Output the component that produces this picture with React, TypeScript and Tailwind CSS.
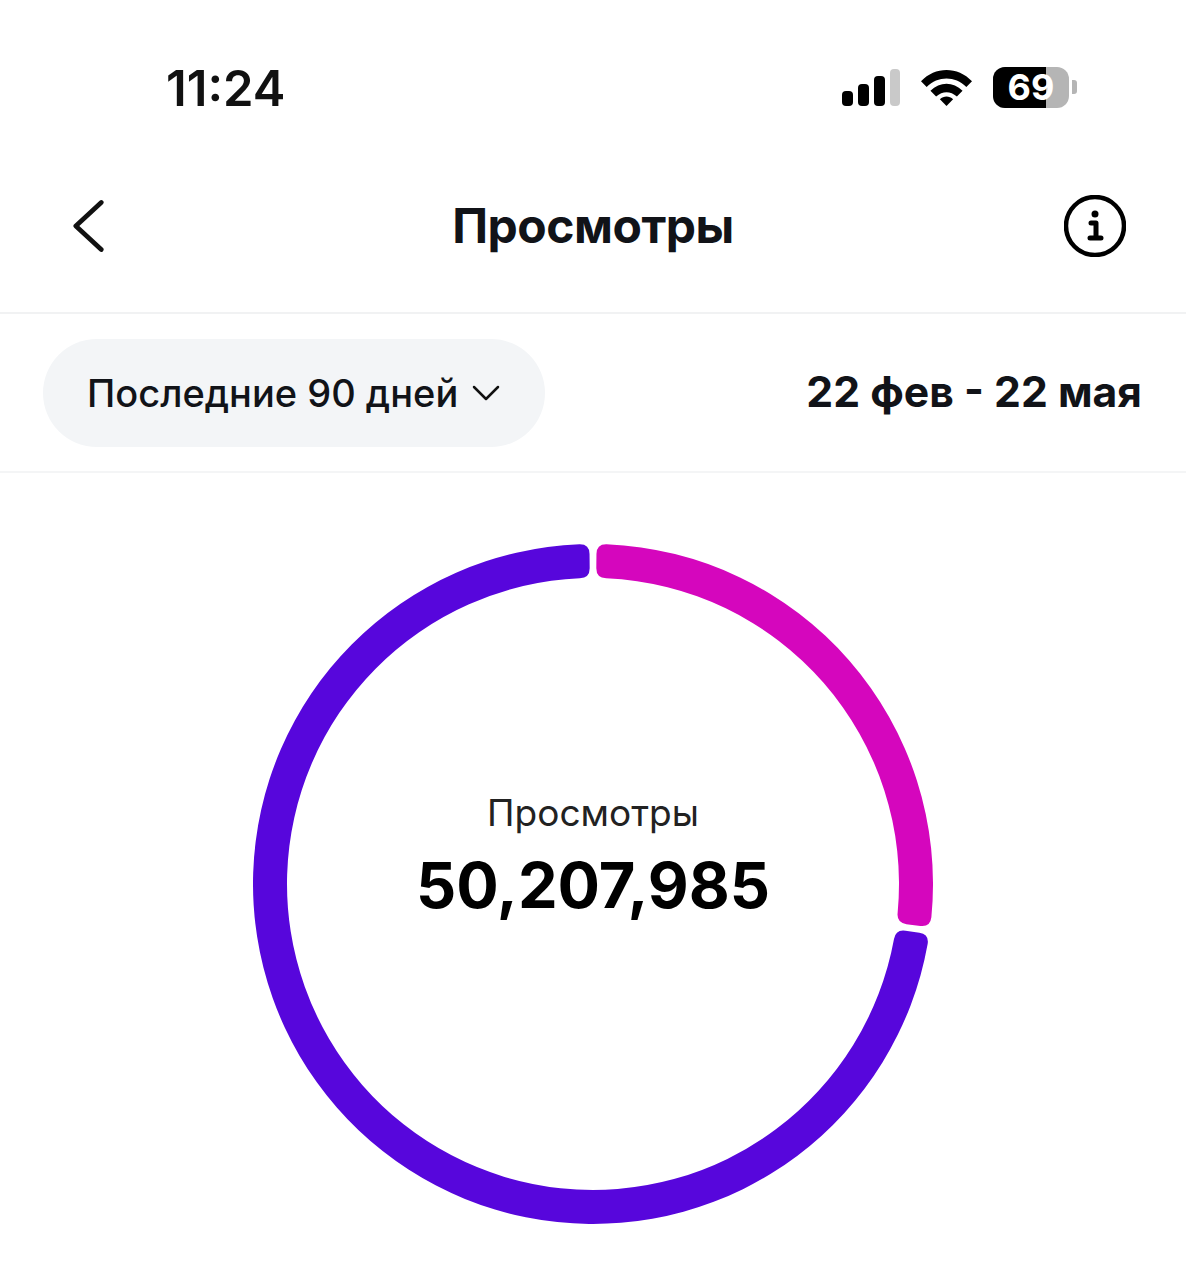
const polar = (r: number, deg: number) => {
  const a = ((deg - 90) * Math.PI) / 180;
  return `${(340 + r * Math.cos(a)).toFixed(2)} ${(340 + r * Math.sin(a)).toFixed(2)}`;
};

// ring segment with small rounded corners
const sector = (start: number, end: number) => {
  const outer = 340;
  const inner = 306;
  const c = 10;
  const dOut = ((c / outer) * 180) / Math.PI;
  const dIn = ((c / inner) * 180) / Math.PI;
  const large = end - start > 180 ? 1 : 0;
  return [
    `M ${polar(outer, start + dOut)}`,
    `A ${outer} ${outer} 0 ${large} 1 ${polar(outer, end - dOut)}`,
    `Q ${polar(outer, end)} ${polar(outer - c, end)}`,
    `L ${polar(inner + c, end)}`,
    `Q ${polar(inner, end)} ${polar(inner, end - dIn)}`,
    `A ${inner} ${inner} 0 ${large} 0 ${polar(inner, start + dIn)}`,
    `Q ${polar(inner, start)} ${polar(inner + c, start)}`,
    `L ${polar(outer - c, start)}`,
    `Q ${polar(outer, start)} ${polar(outer, start + dOut)}`,
    "Z",
  ].join(" ");
};

function StatusBar() {
  return (
    <div className="h-[176px] pt-[58px] pl-[166px] pr-[109px] flex justify-between items-start">
      <span className="text-[49px] leading-[62px] font-semibold text-[#111]">11:24</span>
      <div className="flex items-center gap-[21px] h-[58px]">
        <svg width="58" height="38" viewBox="0 0 58 38">
          <rect x="0" y="23" width="11" height="15" rx="4" fill="#000" />
          <rect x="16" y="16" width="11" height="22" rx="4" fill="#000" />
          <rect x="32" y="8" width="11" height="30" rx="4" fill="#000" />
          <rect x="48" y="1" width="10" height="37" rx="4" fill="#c9c9c9" />
        </svg>
        <svg width="51" height="38" viewBox="0 0 54 38">
          <path d="M0 13 C15 -3 39 -3 54 13 L48 19 C36 7 18 7 6 19 Z" fill="#000" />
          <path d="M10 23 C20 13 34 13 44 23 L38 29 C31 23 23 23 16 29 Z" fill="#000" />
          <path d="M20 32 C24 28 30 28 34 32 L27 39 Z" fill="#000" />
        </svg>
        <div className="flex items-center gap-[3px]">
          <div className="relative w-[76px] h-[41px] rounded-[12px] flex bg-[#b5b5b5]">
            <div className="w-[53px] h-full bg-black rounded-l-[12px]" />
            <span className="absolute inset-0 flex items-center justify-center text-[36px] font-bold text-white leading-none">69</span>
          </div>
          <div className="w-[5px] h-[14px] rounded-r-[3px] bg-[#b5b5b5]" />
        </div>
      </div>
    </div>
  );
}

export default function App() {
  return (
    <div className="w-[1186px] h-[1280px] bg-white overflow-hidden font-['Inter',sans-serif] text-[#111318]">
      <StatusBar />
      <header className="h-[138px] border-b-2 border-[#f1f2f3] flex items-center justify-between px-[60px] pb-[36px]">
        <div className="w-[62px] pl-[13px]">
          <svg width="32" height="56" viewBox="0 0 34 56" fill="none" stroke="#111" strokeWidth="5" strokeLinecap="round" strokeLinejoin="round" className="block">
            <path d="M30 3 L3 28 L30 53" />
          </svg>
        </div>
        <h1 className="text-[48px] leading-none font-bold tracking-[-0.5px]">Просмотры</h1>
        <svg width="62" height="62" viewBox="0 0 62 62" fill="none">
          <circle cx="31" cy="31" r="29" stroke="#000" strokeWidth="4.5" />
          <circle cx="31" cy="19" r="3.5" fill="#000" />
          <path d="M27 28 H32 V42 M26 43 H37" stroke="#000" strokeWidth="5" strokeLinecap="round" strokeLinejoin="round" />
        </svg>
      </header>
      <div className="h-[159px] border-b-2 border-[#f4f5f6] flex items-center justify-between pl-[43px] pr-[44px]">
        <button className="w-[502px] h-[108px] rounded-[54px] bg-[#f3f5f7] flex items-center pl-[44px] gap-[14px]">
          <span className="text-[38px] leading-none font-medium">Последние 90 дней</span>
          <svg width="28" height="18" viewBox="0 0 28 18" fill="none" stroke="#111" strokeWidth="2.5" strokeLinecap="round" strokeLinejoin="round">
            <path d="M2 3 L14 15 L26 3" />
          </svg>
        </button>
        <span className="text-[42.7px] leading-none font-bold">22 фев - 22 мая</span>
      </div>
      <div className="flex justify-center pt-[71px]">
        <div className="relative w-[680px] h-[680px]">
          <svg width="680" height="680" viewBox="0 0 680 680">
            <path d={sector(0.6, 97.3)} fill="#d506bd" />
            <path d={sector(98.5, 359.4)} fill="#5706dc" />
          </svg>
          <div className="absolute inset-0 flex flex-col items-center justify-center pb-[55px]">
            <span className="text-[37px] leading-[44px] text-[#222]">Просмотры</span>
            <span className="text-[63px] leading-[74px] mt-[13px] font-bold text-black">50,207,985</span>
          </div>
        </div>
      </div>
    </div>
  );
}
